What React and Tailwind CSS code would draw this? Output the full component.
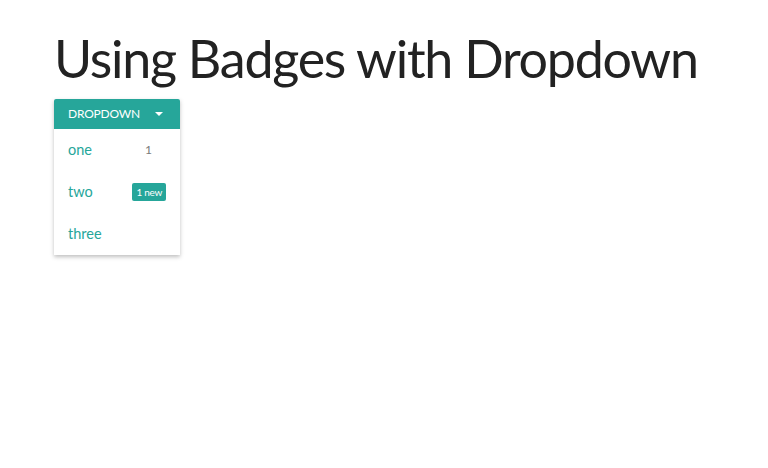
import React from "react";

const teal = "text-[#26a69a]";

const App = () => {
  return (
    <div className="min-h-[468px] bg-white px-[54px] pt-[22px] font-['Lato',sans-serif]">
      <h1 className="whitespace-nowrap text-[52px] font-normal leading-[72px] tracking-[-1.25px] text-[#222]">
        Using Badges with Dropdown
      </h1>
      <div className="mt-[5px] w-[126px] shadow-[0_2px_4px_rgba(0,0,0,0.25)]">
        <button className="flex h-[30px] w-full items-center justify-between rounded-t-[2px] bg-[#26a69a] pl-[14px] pr-[17px] text-[12px] tracking-[-0.2px] uppercase text-white">
          Dropdown
          <svg width="8" height="4" viewBox="0 0 10 5">
            <path d="M0 0 L10 0 L5 5 Z" fill="white" />
          </svg>
        </button>
        <ul className="bg-white">
          <li className="flex h-[42px] items-center justify-between pl-[14px] pr-[28px]">
            <span className={`${teal} text-[14.5px]`}>one</span>
            <span className="text-[12px] text-[#7a7a7a]">1</span>
          </li>
          <li className="flex h-[42px] items-center justify-between pl-[14px] pr-[14px]">
            <span className={`${teal} text-[14.5px]`}>two</span>
            <span className="rounded-[2px] bg-[#26a69a] px-[4px] text-[10px] leading-[18px] tracking-[-0.3px] text-white">
              1 new
            </span>
          </li>
          <li className="flex h-[42px] items-center pl-[14px]">
            <span className={`${teal} text-[14.5px]`}>three</span>
          </li>
        </ul>
      </div>
    </div>
  );
};

export default App;
